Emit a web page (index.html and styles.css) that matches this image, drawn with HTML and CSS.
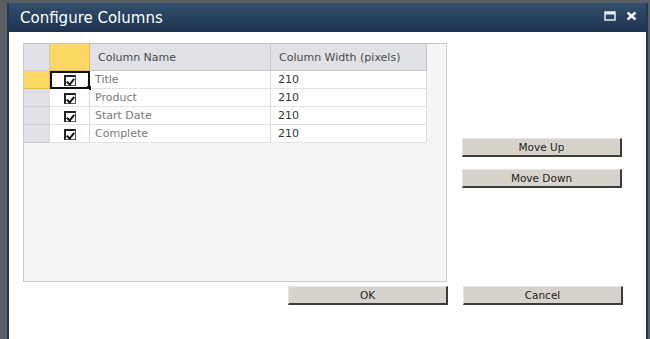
FILE: index.html
```html
<!DOCTYPE html>
<html lang="en">
<head>
    <meta charset="UTF-8">
    <title>Configure Columns</title>
    <link rel="stylesheet" href="styles.css">
</head>
<body>
    <div class="dialog">
        <div class="titlebar">
            <span class="title">Configure Columns</span>
            <div class="title-icons">
                <svg width="12" height="10" viewBox="0 0 12 10">
                    <rect x="1" y="1" width="10" height="8" fill="none" stroke="#e8eef4" stroke-width="1.5"/>
                    <rect x="1" y="1" width="10" height="2.5" fill="#e8eef4"/>
                </svg>
                <svg width="11" height="10" viewBox="0 0 11 10">
                    <path d="M1.5 1.5 L9.5 8.5 M9.5 1.5 L1.5 8.5" stroke="#f4f6f8" stroke-width="2.4"/>
                </svg>
            </div>
        </div>

        <div class="content">
            <div class="main">
                <div class="grid">
                    <table class="columns">
                        <tr class="head">
                            <th class="rowhead"></th>
                            <th class="check sel"></th>
                            <th class="name">Column Name</th>
                            <th class="width">Column Width (pixels)</th>
                        </tr>
                        <tr>
                            <td class="rowhead sel"></td>
                            <td class="check focus"><span class="box"></span><span class="handle"></span></td>
                            <td class="name">Title</td>
                            <td class="width">210</td>
                        </tr>
                        <tr>
                            <td class="rowhead"></td>
                            <td class="check"><span class="box"></span></td>
                            <td class="name">Product</td>
                            <td class="width">210</td>
                        </tr>
                        <tr>
                            <td class="rowhead"></td>
                            <td class="check"><span class="box"></span></td>
                            <td class="name">Start Date</td>
                            <td class="width">210</td>
                        </tr>
                        <tr>
                            <td class="rowhead"></td>
                            <td class="check"><span class="box"></span></td>
                            <td class="name">Complete</td>
                            <td class="width">210</td>
                        </tr>
                    </table>
                </div>
                <div class="side">
                    <button>Move Up</button>
                    <button>Move Down</button>
                </div>
            </div>
            <div class="footer">
                <button class="ok">OK</button>
                <button>Cancel</button>
            </div>
        </div>
    </div>
</body>
</html>
```

FILE: styles.css
```css
body { margin: 0; background: #5a5f66; font-family: "DejaVu Sans", Verdana, sans-serif; height: 339px; overflow: hidden; }
.dialog { margin: 3px 0 0 7px; width: 637px; height: 336px; background: #fff; border-left: 2px solid #1d3957; border-right: 2px solid #1d3957; }
.titlebar { height: 29px; display: flex; align-items: center; justify-content: space-between; padding: 0 9px 0 11px; background: linear-gradient(#34506c, #1c3350); }
.title { color: #fff; font-size: 15px; padding-bottom: 0; }
.title-icons { display: flex; gap: 10px; align-items: center; padding-bottom: 3px; }
.title-icons svg { display: block; }

.content { padding: 11px 0 0 14px; }
.main { display: flex; gap: 15px; }
.grid { width: 422px; height: 237px; background: #f5f5f5; border: 1px solid #c9c9c9; }
.columns { border-collapse: collapse; font-size: 11px; }
.columns th, .columns td { padding: 0; height: 17px; border-right: 1px solid #dcdcdc; border-bottom: 1px solid #e2e2e2; }
.columns th { height: 26px; background: #dfe1e6; color: #444; font-weight: normal; text-align: left; border-right: 1px solid #c4c6ca; border-bottom: 1px solid #c4c6ca; }
.columns td { background: #fff; }
.columns .rowhead { width: 25px; background: #dfe1e6; border-bottom: 1px solid #ccced2; }
.columns .check { width: 39px; text-align: center; position: relative; }
.columns .sel { background: #fdd764; border-right: 1px solid #e8b940; border-bottom: 1px solid #e8b940; }
.columns .name { width: 172px; padding-left: 5px; color: #7a7a7a; }
.columns th.name { padding-left: 8px; color: #4a4a4a; }
.columns .width { width: 147px; padding-left: 7px; color: #333; }
.columns th.width { padding-left: 8px; color: #4a4a4a; }
.box { display: inline-block; width: 9px; height: 8px; margin-top: 2px; border: 1px solid #555; border-left: 2px solid #222; border-top: 2px solid #222; background: #fff; position: relative; vertical-align: top; }
.box::after { content: ""; position: absolute; left: 2px; top: 0; width: 3px; height: 6px; border-right: 2px solid #111; border-bottom: 2px solid #111; transform: rotate(40deg); }
.columns .focus { outline: 2px solid #111; outline-offset: -2px; }
.handle { position: absolute; right: -2px; bottom: -2px; width: 4px; height: 4px; background: #111; }

.side { display: flex; flex-direction: column; gap: 12px; padding-top: 95px; }
button { width: 160px; height: 19px; padding: 0 0 1px; font-family: "DejaVu Sans", Verdana, sans-serif; font-size: 10.5px; color: #222; background: #d7d3cc; border: 1px solid #e6e4e0; border-right: 2px solid #3c3c3c; border-bottom: 2px solid #3c3c3c; }
.footer { display: flex; gap: 15px; margin: 4px 0 0 265px; }
```
